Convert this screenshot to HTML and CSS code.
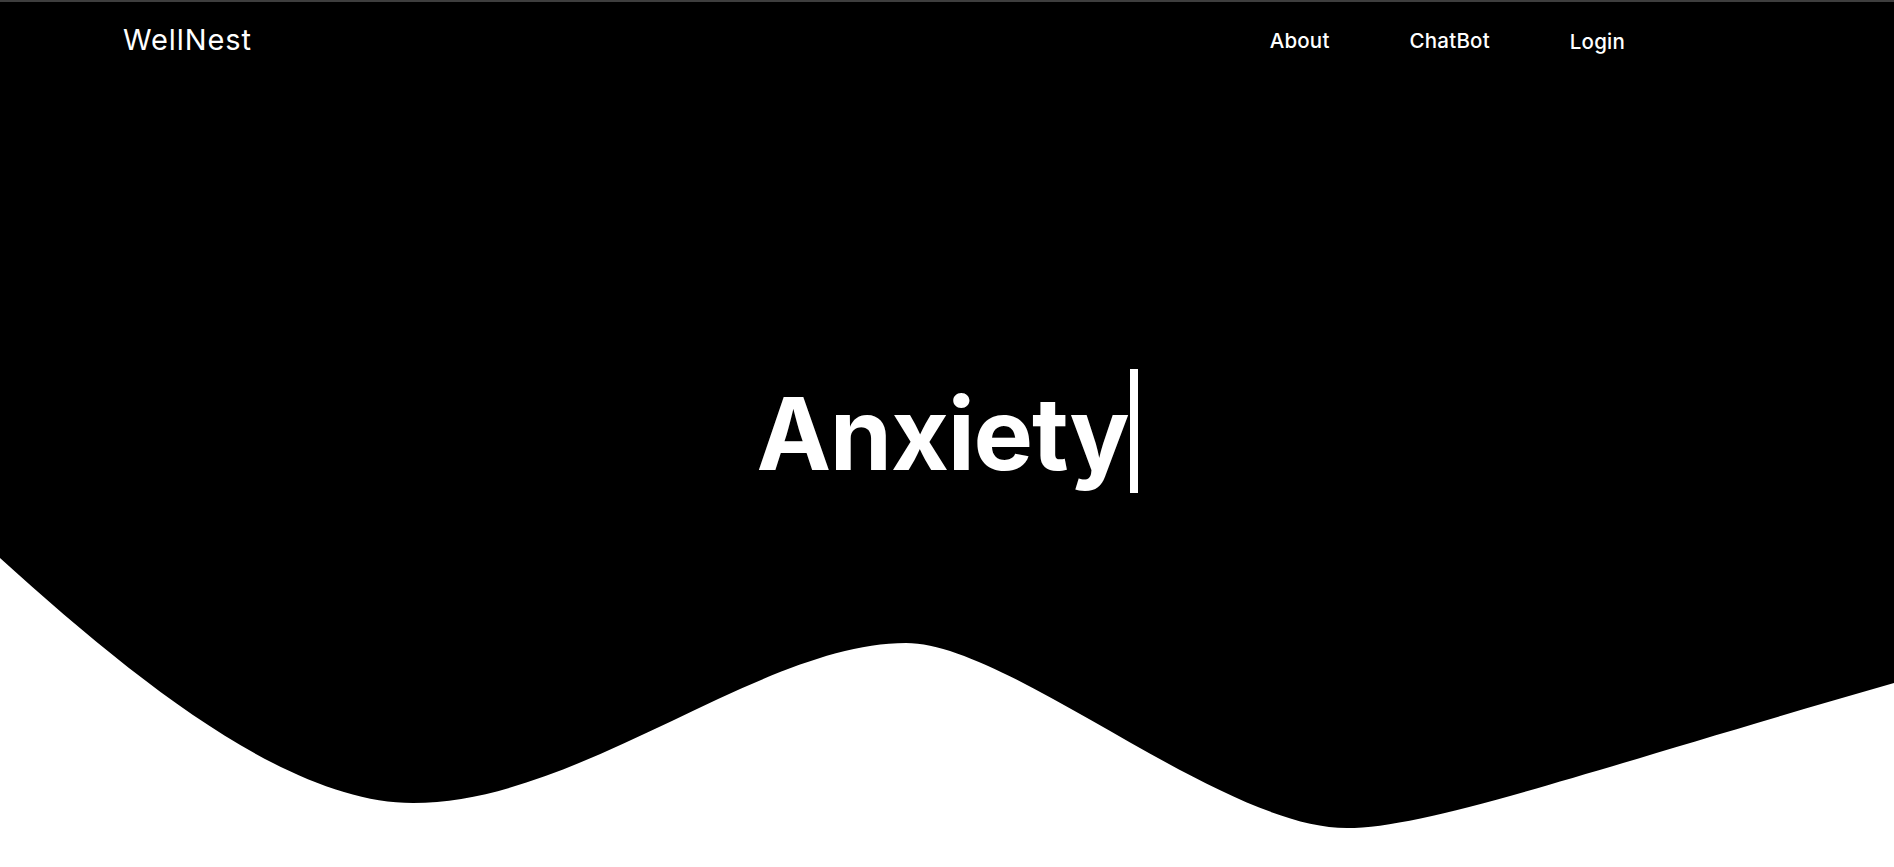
FILE: index.html
```html
<!DOCTYPE html>
<html lang="en">
<head>
<meta charset="utf-8">
<title>WellNest</title>
<link rel="stylesheet" href="styles.css">
</head>
<body>
<header class="topbar">
  <div class="logo">WellNest</div>
  <nav class="nav">
    <a class="nav-link" href="#">About</a>
    <a class="nav-link" href="#">ChatBot</a>
    <a class="nav-link nav-login" href="#">Login</a>
  </nav>
</header>
<section class="hero">
  <h1 class="title">Anxiety<span class="cursor"></span></h1>
</section>
<svg class="wave" viewBox="0 0 1894 310" preserveAspectRatio="none" aria-hidden="true">
  <path d="M0,0 L0,1 C140,128 290,246 413,246 C580,246 760,86 906,86 C1010,86 1220,271 1347,271 C1430,271 1600,210 1894,126 L1894,0 Z" fill="#000"/>
</svg>
</body>
</html>
```
FILE: styles.css
```css
html, body {
  margin: 0;
  padding: 0;
  background: #ffffff;
}
body {
  font-family: Inter, "Noto Sans", sans-serif;
  overflow: hidden;
}
.topbar {
  box-sizing: border-box;
  height: 76px;
  border-top: 2px solid #3e3e3e;
  background: #000;
  display: flex;
  align-items: center;
  justify-content: space-between;
  padding: 0 269px 0 123px;
}
.logo {
  color: #fff;
  font-size: 29px;
  font-weight: 400;
  letter-spacing: 0.9px;
}
.nav {
  display: flex;
  align-items: center;
  gap: 80px;
  padding-top: 2px;
}
.nav-link {
  color: #fff;
  text-decoration: none;
  font-size: 20.5px;
  font-weight: 500;
  letter-spacing: 0.2px;
}
.nav-login {
  position: relative;
  top: 1px;
}
.hero {
  height: 481px;
  background: #000;
}
.title {
  margin: 0;
  padding-top: 293px;
  text-align: center;
  color: #fff;
  font-size: 100px;
  font-weight: 700;
  line-height: 100px;
  letter-spacing: -1.2px;
}
.cursor {
  display: inline-block;
  width: 8px;
  height: 124px;
  margin-left: 1px;
  background: #fff;
  vertical-align: -23px;
}
.wave {
  display: block;
  width: 100%;
  height: 310px;
}
```
